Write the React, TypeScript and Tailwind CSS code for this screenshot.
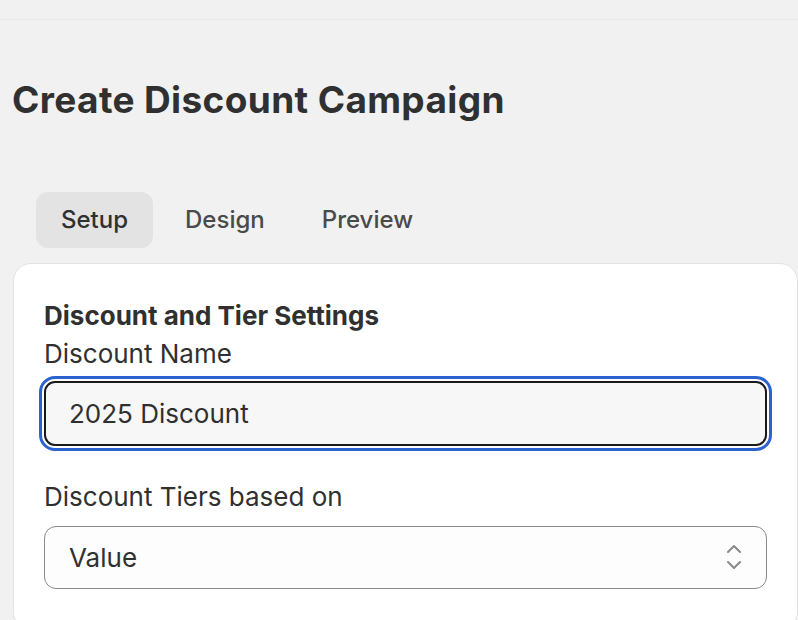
import React, { useState } from 'react';

const tabs = ['Setup', 'Design', 'Preview'];

const App = () => {
  const [active, setActive] = useState('Setup');
  const [name, setName] = useState('2025 Discount');

  return (
    <div className="min-h-[620px] overflow-hidden bg-[#f1f1f1] font-['Inter',sans-serif] text-[#303030]">
      {/* top bar edge */}
      <div className="h-[20px] border-b border-[#e6e6e6]" />

      <h1 className="mt-[56px] pl-[12px] text-[37px] font-bold leading-[48px] tracking-[0.01em]">
        Create Discount Campaign
      </h1>

      {/* tabs */}
      <div className="mt-[68px] flex gap-[7px] pl-[36px]">
        {tabs.map((tab) => (
          <button
            key={tab}
            onClick={() => setActive(tab)}
            className={
              'h-[56px] rounded-[12px] px-[25px] text-[24px] font-medium ' +
              (active === tab ? 'bg-[#e3e3e3] text-[#303030]' : 'text-[#4a4a4a]')
            }
          >
            {tab}
          </button>
        ))}
      </div>

      {/* card */}
      <div className="ml-[13px] mt-[15px] rounded-[18px] border border-[#e3e3e3] bg-white px-[30px] pb-[40px] pt-[37px]">
        <h2 className="text-[26px] font-bold leading-[30px]">Discount and Tier Settings</h2>
        <label className="mt-[8px] block text-[26px] leading-[30px]">Discount Name</label>
        <div className="-mx-[5px] mt-[7px] rounded-[16px] border-[3px] border-[#2c62cf] p-[2px]">
          <input
            value={name}
            onChange={(e) => setName(e.target.value)}
            className="block h-[65px] w-full rounded-[11px] border-[2px] border-[#1a1a1a] bg-[#f7f7f7] px-[23px] text-[26px] outline-none"
          />
        </div>

        <label className="mt-[31px] block text-[26px] leading-[30px]">Discount Tiers based on</label>
        <div className="relative mt-[14px]">
          <select className="block h-[63px] w-full appearance-none rounded-[12px] border border-[#8a8a8a] bg-[#fdfdfd] px-[24px] text-[26px] outline-none">
            <option>Value</option>
            <option>Quantity</option>
          </select>
          <svg
            className="pointer-events-none absolute right-[25px] top-[18px]"
            width="16"
            height="26"
            viewBox="0 0 16 26"
            fill="none"
            stroke="#8a8a8a"
            strokeWidth="2"
            strokeLinecap="round"
            strokeLinejoin="round"
          >
            <path d="M2 8l6-6 6 6" />
            <path d="M2 18l6 6 6-6" />
          </svg>
        </div>
      </div>
    </div>
  );
};

export default App;
